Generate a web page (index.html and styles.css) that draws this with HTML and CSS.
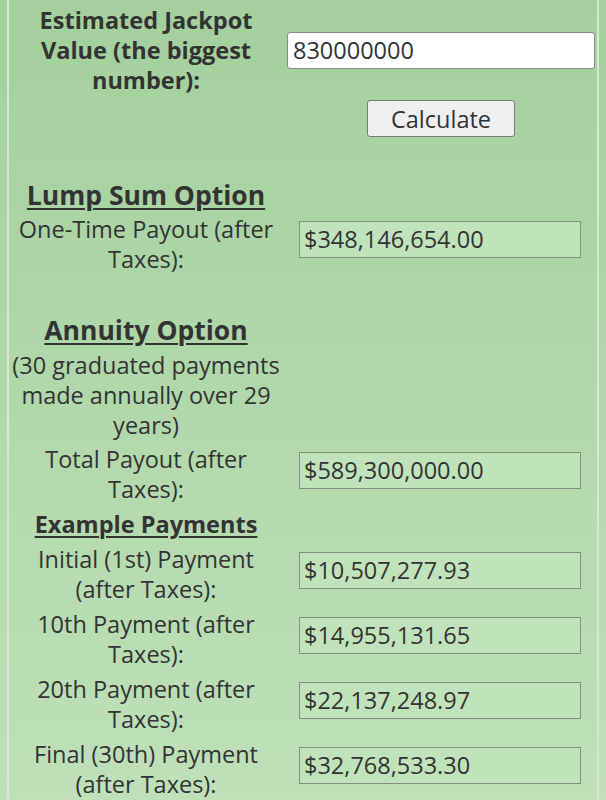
FILE: index.html
```html
<!DOCTYPE html>
<html>
<head>
<meta charset="utf-8">
<link rel="stylesheet" href="styles.css">
</head>
<body>
<div class="wrap">
  <div class="row row-top">
    <div class="label label-strong">Estimated Jackpot Value (the biggest number):</div>
    <div class="field field-input"><input class="jackpot" type="text" value="830000000"></div>
  </div>
  <div class="row row-button">
    <div class="label"></div>
    <div class="field field-button"><button class="calc" type="button">Calculate</button></div>
  </div>

  <div class="heading heading-lump">Lump Sum Option</div>
  <div class="row row-lump">
    <div class="label">One-Time Payout (after Taxes):</div>
    <div class="field"><div class="out">$348,146,654.00</div></div>
  </div>

  <div class="heading heading-annuity">Annuity Option</div>
  <div class="desc">(30 graduated payments made annually over 29 years)</div>
  <div class="row row-total">
    <div class="label">Total Payout (after Taxes):</div>
    <div class="field"><div class="out">$589,300,000.00</div></div>
  </div>

  <div class="subheading">Example Payments</div>
  <div class="row row-pay">
    <div class="label">Initial (1st) Payment (after Taxes):</div>
    <div class="field"><div class="out">$10,507,277.93</div></div>
  </div>
  <div class="row row-pay">
    <div class="label">10th Payment (after Taxes):</div>
    <div class="field"><div class="out">$14,955,131.65</div></div>
  </div>
  <div class="row row-pay">
    <div class="label">20th Payment (after Taxes):</div>
    <div class="field"><div class="out">$22,137,248.97</div></div>
  </div>
  <div class="row row-pay">
    <div class="label">Final (30th) Payment (after Taxes):</div>
    <div class="field"><div class="out">$32,768,533.30</div></div>
  </div>
</div>
</body>
</html>
```

FILE: styles.css
```css
html, body {
  margin: 0;
  padding: 0;
}
body {
  min-height: 800px;
  background: linear-gradient(to bottom, #a3d09d 0px, #bfe0b9 800px);
  font-family: "Open Sans", "Noto Sans", sans-serif;
  color: #333333;
  font-size: 23.5px;
  line-height: 30px;
}
.wrap {
  margin: 0 7px;
  min-height: 800px;
  border-left: 2px solid #d9e5d6;
  border-right: 2px solid #d9e5d6;
  padding-top: 5px;
  box-sizing: border-box;
}
.row {
  display: flex;
  gap: 4px;
}
.label {
  width: 274px;
  flex: none;
  text-align: center;
}
.label-strong {
  font-weight: 700;
}
.field {
  flex: 1;
  padding-left: 12px;
}
.row-top .field {
  padding-left: 0;
  display: flex;
  align-items: center;
}
.jackpot {
  width: 308px;
  height: 37px;
  box-sizing: border-box;
  border: 1px solid #8a8a8a;
  border-radius: 3px;
  background: #ffffff;
  font-family: "Open Sans", "Noto Sans", sans-serif;
  font-size: 23.5px;
  color: #333333;
  padding: 0 5px;
  margin: 0;
}
.row-button {
  margin-top: 5px;
}
.field-button {
  padding-left: 0;
  width: 308px;
  flex: none;
  display: flex;
  justify-content: center;
}
.calc {
  width: 148px;
  height: 37px;
  margin: 0;
  padding: 0;
  border: 1px solid #7a7a7a;
  border-radius: 3px;
  background: #efefef;
  font-family: "Open Sans", "Noto Sans", sans-serif;
  font-size: 23.5px;
  color: #333333;
}
.heading {
  width: 274px;
  text-align: center;
  font-size: 26.5px;
  line-height: 36px;
  font-weight: 700;
  text-decoration: underline;
  text-decoration-thickness: 2px;
  text-underline-offset: 3px;
}
.heading-lump {
  margin-top: 40px;
}
.row-lump {
  margin-top: 1px;
}
.heading-annuity {
  margin-top: 38px;
}
.desc {
  width: 274px;
  margin-top: 2px;
  text-align: center;
}
.row-total {
  margin-top: 4px;
}
.subheading {
  width: 274px;
  margin-top: 5px;
  text-align: center;
  font-weight: 700;
  text-decoration: underline;
  text-decoration-thickness: 2px;
  text-underline-offset: 3px;
}
.row-pay {
  margin-top: 5px;
}
.out {
  width: 282px;
  height: 37px;
  box-sizing: border-box;
  margin-top: 7px;
  border: 1px solid #858f83;
  background: #c1e3bb;
  padding: 0 4px;
  line-height: 35px;
  white-space: nowrap;
}
.row-total .out,
.row-pay .out {
  margin-top: 8px;
}
```
